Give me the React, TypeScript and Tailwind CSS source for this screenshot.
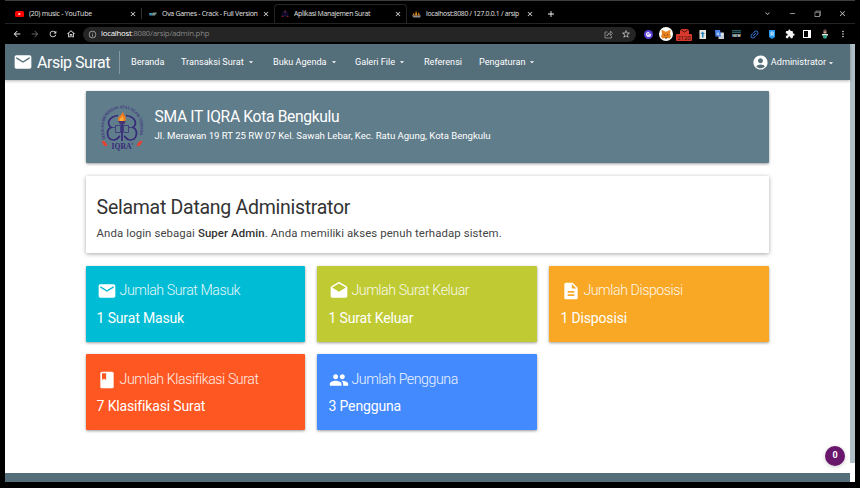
import React from "react";
import {
  MdMail, MdDrafts, MdDescription, MdClass, MdPeople, MdAccountCircle, MdArrowDropDown,
  MdArrowBack, MdArrowForward, MdRefresh, MdOutlineHome, MdInfoOutline, MdStarBorder,
  MdExtension, MdMoreVert, MdLink, MdClose, MdAdd, MdKeyboardArrowDown, MdRemove,
} from "react-icons/md";
import { VscChromeRestore } from "react-icons/vsc";

const TAB_FONT = "font-['Open_Sans','Noto_Sans',sans-serif]";

function YouTubeIcon() {
  return (
    <svg viewBox="0 0 18 12" className="w-[9px] h-[6px]">
      <rect width="18" height="12" rx="3" fill="#f00" />
      <path d="M7 3.5v5L12 6z" fill="#fff" />
    </svg>
  );
}

function OvaIcon() {
  return (
    <svg viewBox="0 0 16 8" className="w-[8px] h-[4px]">
      <path d="M0 2h10l-2 5H1z" fill="#3c8fb0" />
      <path d="M8 1h8l-4 6H7z" fill="#9a8a70" />
      <path d="M10 2h5l-3 3z" fill="#2aa3d8" />
    </svg>
  );
}

function IqraMini() {
  return (
    <svg viewBox="0 0 16 16" className="w-[8px] h-[8px]">
      <path d="M8 2c-5 1-3 5-6 7 0 3 4 4 6 2 2 2 6 1 6-2-3-2-1-6-6-7zM8 3v10" stroke="#30206c" strokeWidth="1.6" fill="none" />
      <path d="M7 1h3v4H7z" fill="#6a2436" />
      <path d="M1 13h3M12 13h3" stroke="#8c1c1c" strokeWidth="2" />
    </svg>
  );
}

function PmaIcon() {
  return (
    <svg viewBox="0 0 18 16" className="w-[9px] h-[8px]">
      <path d="M6 11 8 1l3 10zM12 11l1-7 3 7zM1 11l3-6 1 6z" fill="#f39419" />
      <path d="M0 11h18l-2 4H3z" fill="#8b8790" />
    </svg>
  );
}

function Tab({ icon, title, text }: { icon: React.ReactNode; title: string; text: string }) {
  return (
    <div className="flex h-[18px] w-[122px] shrink-0 items-center">
      <span className="flex w-[9px] shrink-0 justify-center">{icon}</span>
      <span className={`ml-[5px] mt-px flex-1 overflow-hidden whitespace-nowrap text-[#e2e2e2] ${text}`}>{title}</span>
      <MdClose className="size-[8px] shrink-0 text-[#eee]" />
    </div>
  );
}

function Toolbar() {
  return (
    <div className="flex h-[21px] shrink-0 items-center border-t border-[#242424] bg-black text-[#e4e4e4]">
      <div className="flex w-[78px] shrink-0 items-center gap-[8px] pl-[7px]">
        <MdArrowBack className="size-[10px] shrink-0" />
        <MdArrowForward className="size-[10px] shrink-0 text-[#666]" />
        <MdRefresh className="size-[10px] shrink-0" />
        <MdOutlineHome className="size-[10px] shrink-0" />
      </div>
      <div className="flex h-[15px] w-[553px] shrink-0 items-center rounded-full bg-[#252525] pl-[5px] pr-[5px]">
        <MdInfoOutline className="size-[9px] text-[#aaa]" />
        <span className={`ml-[4px] flex-1 whitespace-nowrap text-[7.8px] tracking-[-0.25px] text-[#858585] ${TAB_FONT}`}>
          <span className="text-white">localhost</span>:8080/arsip/admin.php
        </span>
        <svg viewBox="0 0 18 18" className="size-[9px]" fill="none" stroke="#999" strokeWidth="1.6">
          <path d="M7 4H2v12h13v-4M6 12c0-4 3-6 7-6V2l4 5-4 4V8c-4 0-5 1-7 4z" />
        </svg>
        <MdStarBorder className="ml-[8px] size-[10px] text-[#c4c4c4]" />
      </div>
      <div className="flex h-full flex-1 items-center">
        <svg viewBox="0 0 18 18" className="ml-[8px] size-[9px] shrink-0">
          <circle cx="9" cy="9" r="9" fill="#5b3ed6" />
          <path d="M4 6c4-3 7-2 7 1l3 1c1 4-1 6-4 6-5 1-7-4-6-8z" fill="#e9e4ff" />
          <circle cx="8" cy="8" r="1.500" fill="#5b3ed6" />
        </svg>
        <svg viewBox="0 0 28 28" className="ml-[6px] size-[14px] shrink-0">
          <circle cx="14" cy="14" r="14" fill="#fff" />
          <path d="m5 5 7 4h4l7-4-1 9 2 5-3 4-5-1h-4l-5 1-3-4 2-5z" fill="#e8821e" />
          <path d="m8 14 5 2-1 2zM20 14l-5 2 1 2zM11 21h6l-1 2h-4z" fill="#70401c" />
        </svg>
        <div className="ml-[3px] mt-[2px] flex w-[16px] shrink-0 flex-col items-center">
          <svg viewBox="0 0 18 10" className="h-[5px] w-[9px]">
            <path d="M0 10V3l3-3h12l3 3v7z" fill="#d8392d" />
            <path d="m3 2 6 4 6-4" stroke="#401010" strokeWidth="2" fill="none" />
          </svg>
          <span className="h-[7px] w-full rounded-[1px] bg-[#d8392d] text-center font-['Roboto',sans-serif] text-[6px] leading-[7px] text-[#3c0b08]">2120</span>
        </div>
        <svg viewBox="0 0 14 18" className="ml-[7px] h-[9px] w-[7px] shrink-0">
          <rect width="14" height="18" fill="#e6e6df" />
          <path d="M7 3 3 8h3v7h3V8h3z" fill="#2383ba" />
          <path d="M0 0h2v18H0z" fill="#807e70" />
        </svg>
        <svg viewBox="0 0 18 18" className="ml-[9px] size-[9px] shrink-0">
          <rect x="7" y="5" width="11" height="13" rx="1" fill="#c8cbd2" />
          <path d="M0 0h10l3 13H1z" fill="#4983e8" />
          <path d="M8 6H5a2 2 0 1 0 3 2H6M11 9h5m-2-2c0 4-2 5-2 6" fill="none" stroke="#fff" strokeWidth="1.2" />
        </svg>
        <div className="ml-[8px] w-[9px] shrink-0 text-center font-['Roboto',sans-serif] text-[4px] font-bold leading-[4px] text-[#d6e2e2]">
          <div className="mb-px h-[3px] border-y border-[#245b60] bg-[#10282b]" />
          NEW
        </div>
        <MdLink className="ml-[8px] size-[11px] shrink-0 -rotate-45 text-[#387ee8]" />
        <svg viewBox="0 0 12 18" className="ml-[9px] h-[9px] w-[6px] shrink-0">
          <path d="M0 0h12v14l-6 4-6-4z" fill="#2496ed" />
          <path d="M4 12V4h3a2 2 0 0 1 0 4H4m3 0 2 4" stroke="#fff" strokeWidth="1.5" fill="none" />
        </svg>
        <MdExtension className="ml-[10px] size-[10px] shrink-0 text-[#f2f2f2]" />
        <svg viewBox="0 0 16 16" className="ml-[8px] size-[8px] shrink-0">
          <rect x="1" y="1" width="14" height="14" fill="none" stroke="#fff" strokeWidth="2" />
          <path d="M10 1h5v14h-5z" fill="#fff" />
        </svg>
        <svg viewBox="0 0 12 20" className="ml-[11px] h-[10px] w-[6px] shrink-0">
          <circle cx="6" cy="4" r="3.5" fill="#6b5047" />
          <path d="M3 5h6v4H3z" fill="#c9a48f" />
          <path d="M0 10h12v3H9v4H3v-4H0z" fill="#dce7e3" />
          <path d="M3 12h6v7H3z" fill="#30a88a" />
        </svg>
        <MdMoreVert className="ml-[10px] size-[10px] shrink-0" />
      </div>
    </div>
  );
}

function BrowserBar() {
  return (
    <div className="h-[44px] shrink-0 bg-black pl-[5px] pr-[5px]">
      <div className={`flex h-[23px] items-end border-t border-[#3c3f3f] ${TAB_FONT}`}>
        <div className="flex h-[18px] w-[10px] shrink-0" />
        <Tab icon={<YouTubeIcon />} title="(20) music - YouTube" text="text-[7px] tracking-[-0.25px]" />
        <div className="mb-[4px] ml-[4px] h-[11px] w-[7px] shrink-0 border-l border-[#303030]" />
        <Tab icon={<OvaIcon />} title="Ova Games - Crack - Full Version" text="text-[7px] tracking-[-0.3px]" />
        <div className="ml-[4px] w-[133px] shrink-0 rounded-t-[4px] border-x border-t border-[#252525] pl-[5px]">
          <Tab icon={<IqraMini />} title="Aplikasi Manajemen Surat" text="text-[6.9px] tracking-[-0.3px]" />
        </div>
        <div className="w-[5px] shrink-0" />
        <Tab icon={<PmaIcon />} title="localhost:8080 / 127.0.0.1 / arsip" text="text-[6.8px] tracking-[-0.27px]" />
        <MdAdd className="mb-[4px] ml-[12px] size-[10px] text-white" />
        <div className="mb-[5px] ml-auto mr-[8px] flex items-center gap-[16px] text-[#bbb]">
          <MdKeyboardArrowDown className="size-[9px]" />
          <MdRemove className="size-[9px]" />
          <VscChromeRestore className="size-[9px]" />
          <MdClose className="size-[9px]" />
        </div>
      </div>
      <Toolbar />
    </div>
  );
}

function NavItem({ label, width, caret = false }: { label: string; width: string; caret?: boolean }) {
  return (
    <a className={`flex shrink-0 items-center whitespace-nowrap pt-px ${width}`}>
      {label}
      {caret && <MdArrowDropDown className="ml-[2px] size-[10px]" />}
    </a>
  );
}

function Navbar() {
  return (
    <nav className="z-10 flex h-[36px] shrink-0 items-center bg-[#546e7a] text-[9.1px] text-white shadow-[0_1px_3px_rgba(0,0,0,0.3)]">
      <MdMail className="ml-[8px] size-[20px] shrink-0" />
      <span className="ml-[4px] mt-px w-[82px] shrink-0 whitespace-nowrap text-[16px] tracking-[-0.48px]">Arsip Surat</span>
      <span className="h-[23px] w-[12px] shrink-0 border-l border-[#8499a2]" />
      <NavItem label="Beranda" width="w-[50px]" />
      <NavItem label="Transaksi Surat" width="w-[92px]" caret />
      <NavItem label="Buku Agenda" width="w-[82px]" caret />
      <NavItem label="Galeri File" width="w-[69px]" caret />
      <NavItem label="Referensi" width="w-[55px]" />
      <NavItem label="Pengaturan" width="w-[64px]" caret />
      <div className="ml-auto mr-[14px] flex items-center whitespace-nowrap pt-px">
        <MdAccountCircle className="mr-[2px] size-[17px]" />
        Administrator
        <MdArrowDropDown className="size-[10px]" />
      </div>
    </nav>
  );
}

function SchoolLogo() {
  return (
    <svg viewBox="0 0 44 48" className="h-[48px] w-[44px] shrink-0">
      <defs>
        <path id="ring" d="M4.500 36C-1 18 7 5.500 21 5.500S43 18 37.500 36" />
      </defs>
      <text fontSize="4.200" fontWeight="700" fill="#473d82" fontFamily="Roboto, sans-serif">
        <textPath href="#ring" textLength="78" lengthAdjust="spacingAndGlyphs">SEKOLAH MENENGAH ATAS ISLAM TERPADU</textPath>
      </text>
      <g fill="none" stroke="#37297a" strokeWidth="1.7">
        <path d="M17 12.500c-9 1-12 8-7 12-5 2-5 12.500 3 12.500 4 0 4-3 6-4" />
        <path d="M25 12.500c9 1 12 8 7 12 5 2 5 12.500-3 12.500-4 0-4-3-6-4" />
        <path d="M21 20v18" />
        <path d="M14.500 22.500h5v7h-5zM22.500 22.500h5v7h-5zM9 24.500h5M28 24.500h5" strokeWidth="0.9" opacity="0.8" />
      </g>
      <path d="M17 17.500h8l-2 4h-4z" fill="#493472" />
      <path d="M22 8.500c0 3 4 5 2.500 9.500h-7c-2-4 3-5 4.500-9.500z" fill="#ef7d20" />
      <path d="M21.500 13c1 2 1.500 3 .5 5h-3c-1-2 1-3 2.500-5z" fill="#ffad3b" />
      <path d="m1 38 3 1 2 4-3-1zM41 38l-3 1-2 4 3-1z" fill="#e64232" stroke="#e64232" />
      <text x="21.500" y="46" textAnchor="middle" textLength="22" lengthAdjust="spacingAndGlyphs" fontFamily="Liberation Serif, serif" fontSize="8" fontWeight="700" fill="#382a7a">IQRA'</text>
    </svg>
  );
}

function StatCard({ icon, label, value, color }: { icon: React.ReactNode; label: string; value: string; color: string }) {
  return (
    <section className={`h-[76px] rounded-[1px] pl-[11px] pt-[14px] text-white shadow-[0_1px_3px_rgba(0,0,0,0.4)] ${color}`}>
      <div className="flex h-[21px] items-center">
        <span className="mt-[2px] flex size-[21px] shrink-0 items-center justify-center">{icon}</span>
        <span className="ml-[2px] mt-[2px] whitespace-nowrap text-[14.2px] font-light tracking-[-0.44px] opacity-90">{label}</span>
      </div>
      <div className="mt-[7px] text-[14px] leading-[20px] tracking-[-0.15px]">{value}</div>
    </section>
  );
}

export default function App() {
  return (
    <div className="flex h-[488px] w-[860px] flex-col overflow-hidden bg-black font-['Roboto',sans-serif]">
      <BrowserBar />
      <div className="ml-[5px] flex h-[438px] w-[850px] shrink-0 bg-white">
        <div className="flex w-[845px] flex-col">
          <Navbar />
          <main className="flex-1 pl-[80.600px] pt-[11px]">
            <header className="flex h-[72px] w-[683.500px] rounded-[1px] bg-[#607d8b] pl-[15px] pt-[12px] text-white shadow-[0_1px_3px_rgba(0,0,0,0.4)]">
              <SchoolLogo />
              <div className="ml-[10px]">
                <h1 className="mt-[4px] whitespace-nowrap text-[15.6px] leading-[20px] tracking-[-0.32px]">SMA IT IQRA Kota Bengkulu</h1>
                <p className="mt-[3px] whitespace-nowrap text-[9.6px] leading-[12px] tracking-[-0.02px]">Jl. Merawan 19 RT 25 RW 07 Kel. Sawah Lebar, Kec. Ratu Agung, Kota Bengkulu</p>
              </div>
            </header>
            <section className="mt-[13px] h-[77px] w-[683.500px] rounded-[1px] bg-white pl-[11px] pt-[19px] text-[#333] shadow-[0_1px_4px_rgba(0,0,0,0.35)]">
              <h2 className="whitespace-nowrap text-[19.5px] leading-[26px] tracking-[-0.28px]">Selamat Datang Administrator</h2>
              <p className="mt-[5px] whitespace-nowrap text-[11.4px] leading-[15px] tracking-[0.1px] text-[#444]">
                Anda login sebagai <strong className="font-medium text-[#333]">Super Admin</strong>. Anda memiliki akses penuh terhadap sistem.
              </p>
            </section>
            <div className="mt-[12.6px] grid w-[683.500px] grid-cols-[219.500px_219.500px_219.500px] gap-x-[12.400px] gap-y-[12.6px]">
              <StatCard icon={<MdMail className="size-[20px]" />} label="Jumlah Surat Masuk" value="1 Surat Masuk" color="bg-[#00bcd4]" />
              <StatCard icon={<MdDrafts className="size-[20px]" />} label="Jumlah Surat Keluar" value="1 Surat Keluar" color="bg-[#c0ca33]" />
              <StatCard icon={<MdDescription className="size-[20px]" />} label="Jumlah Disposisi" value="1 Disposisi" color="bg-[#f9a825]" />
              <StatCard icon={<MdClass className="size-[20px]" />} label="Jumlah Klasifikasi Surat" value="7 Klasifikasi Surat" color="bg-[#ff5722]" />
              <StatCard icon={<MdPeople className="size-[20px]" />} label="Jumlah Pengguna" value="3 Pengguna" color="bg-[#448aff]" />
            </div>
          </main>
          <div className="mb-[7px] mr-[5px] flex size-[20px] items-center justify-center self-end rounded-full bg-[#69176c] text-[9px] font-bold text-white shadow-[0_1px_4px_rgba(0,0,0,0.2)]">0</div>
          <footer className="h-[9px] shrink-0 bg-[#546e7a]" />
        </div>
        <div className="h-[419px] w-[5px] bg-[#b0bec5]" />
      </div>
    </div>
  );
}
